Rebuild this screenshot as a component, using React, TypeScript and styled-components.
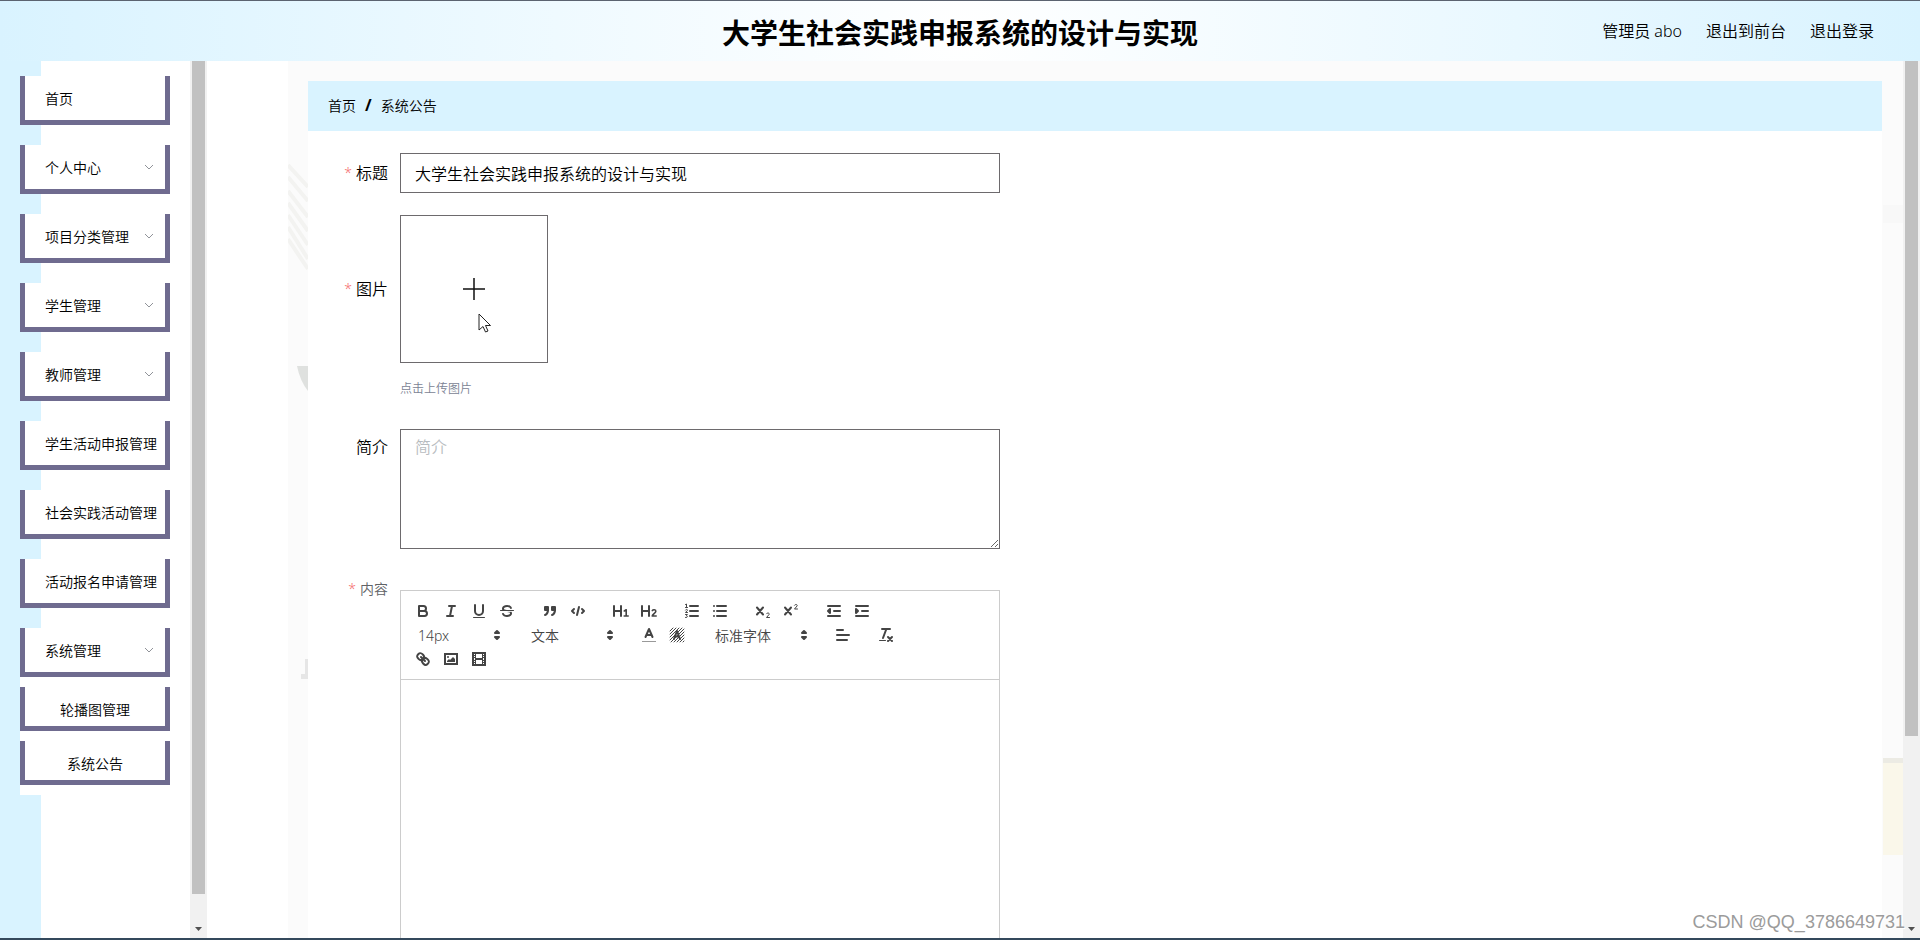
import React from 'react';
import styled, { createGlobalStyle } from 'styled-components';

const GlobalStyle = createGlobalStyle`
  * { box-sizing: border-box; }
  body {
    margin: 0;
    color: #000;
    font-family: "Noto Sans", "Noto Sans CJK SC", sans-serif;
    font-size: 14px;
    font-weight: 350;
  }
  a { color: inherit; text-decoration: none; }
  button, input, textarea, select { font-family: inherit; font-weight: inherit; margin: 0; }
  ul { list-style: none; margin: 0; padding: 0; }
`;

const Shell = styled.div`
  position: relative;
  display: flex;
  flex-direction: column;
  height: 100vh;
  overflow: hidden;
  border-top: 1px solid #5b6370;
  border-bottom: 2px solid #34495c;
`;

const Header = styled.header`
  display: grid;
  grid-template-columns: 1fr auto 1fr;
  align-items: center;
  flex: none;
  height: 60px;
  padding: 0 46px;
  background: radial-gradient(circle, #ffffff, #d9f3ff);
`;

const Title = styled.h1`
  grid-column: 2;
  margin: 0;
  padding-top: 4px;
  font-size: 28px;
  line-height: 56px;
  font-weight: 700;
`;

const UserLinks = styled.nav`
  display: flex;
  justify-content: flex-end;
  gap: 24px;
  font-size: 16px;
  line-height: 60px;
`;

const Body = styled.div`
  display: flex;
  flex: 1;
  min-height: 0;
`;

const Sidebar = styled.aside`
  display: flex;
  justify-content: space-between;
  flex: none;
  width: 207px;
  background: linear-gradient(to right, #d9f3ff 41px, #ffffff 41px);
`;

const Menu = styled.ul`
  display: flex;
  flex-direction: column;
  gap: 20px;
  width: 150px;
  margin: 15px 0 0 20px;
`;

const frame = `
  width: 100%;
  border: 5px solid #6f6b8f;
  border-top: 0;
  background: #ffffff;
  color: #000000;
  font-size: 14px;
`;

const MenuLink = styled.a`
  ${frame}
  display: flex;
  align-items: center;
  height: 49px;
  padding: 0 0 1px 20px;
  white-space: nowrap;
`;

const MenuToggle = styled.button`
  ${frame}
  display: flex;
  align-items: center;
  justify-content: space-between;
  height: 49px;
  padding: 0 10px 1px 20px;
`;

const Submenu = styled.ul`
  display: flex;
  flex-direction: column;
  gap: 10px;
  padding: 10px 0;
  background: #ffffff;
`;

const SubLink = styled.a`
  ${frame}
  display: flex;
  align-items: center;
  justify-content: center;
  height: 44px;
  padding-top: 4px;
`;

const Track = styled.div`
  display: flex;
  flex-direction: column;
  justify-content: space-between;
  align-items: center;
  flex: none;
  width: 17px;
  background: #f1f1f1;
`;

const Thumb = styled.div<{ $share: number }>`
  width: 13px;
  height: ${(p) => p.$share}%;
  background: #c1c1c1;
`;

const Main = styled.main`
  position: relative;
  display: flex;
  flex: 1;
  min-width: 0;
  margin-left: 81px;
  padding: 20px 21px 0 20px;
  background: #fbfbfb;
`;

const LeftArt = styled.svg`
  position: absolute;
  left: 0;
  top: 0;
`;

const RightArt = styled.svg`
  position: absolute;
  right: 0;
  top: 0;
`;

const Panel = styled.section`
  flex: 1;
  min-width: 0;
  background: #ffffff;
`;

const Breadcrumb = styled.nav`
  display: flex;
  align-items: center;
  gap: 9px;
  height: 50px;
  padding: 0 20px 2px;
  background: #d9f3ff;
  b { font-size: 16px; }
`;

const Form = styled.form`
  display: flex;
  flex-direction: column;
  gap: 22px;
  width: 692px;
  padding-top: 22px;
`;

const Row = styled.div`
  display: grid;
  grid-template-columns: 80px 1fr;
  column-gap: 12px;
  align-items: start;
`;

const Label = styled.label<{ $line?: number; $muted?: boolean; $required?: boolean }>`
  display: flex;
  justify-content: flex-end;
  font-size: ${(p) => (p.$muted ? 14 : 16)}px;
  line-height: ${(p) => p.$line ?? 40}px;
  color: ${(p) => (p.$muted ? '#606266' : '#000000')};
  ${(p) => p.$required && `&::before { content: "*"; color: #f56c6c; font-size: 14px; margin-right: 4px; }`}
`;

const TextInput = styled.input`
  width: 100%;
  height: 40px;
  padding: 0 14px;
  border: 1px solid #6d6a6d;
  border-radius: 0;
  background: #ffffff;
  color: #000000;
  font-size: 16px;
`;

const UploadButton = styled.button`
  position: relative;
  display: flex;
  align-items: center;
  justify-content: center;
  width: 148px;
  height: 148px;
  padding: 0;
  border: 1px solid #6d6a6d;
  background: #ffffff;
`;

const Pointer = styled.svg`
  position: absolute;
  left: 77px;
  top: 97px;
`;

const Tip = styled.div`
  padding-top: 8px;
  font-size: 12px;
  line-height: 36px;
  color: #7b8394;
`;

const TextArea = styled.textarea`
  display: block;
  width: 100%;
  height: 120px;
  padding: 5px 14px;
  border: 1px solid #6d6a6d;
  background: #ffffff;
  font-size: 16px;
  line-height: 24px;
  resize: vertical;
  &::placeholder { color: #b8bcc0; }
`;

const Editor = styled.div`
  margin-top: 19px;
  border: 1px solid #cccccc;
`;

const Toolbar = styled.div`
  display: flex;
  flex-wrap: wrap;
  padding: 8px;
  border-bottom: 1px solid #cccccc;
`;

const Group = styled.div`
  display: flex;
  height: 24px;
  margin-right: 15px;
`;

const ToolButton = styled.button`
  width: 28px;
  height: 24px;
  padding: 3px 5px;
  border: 0;
  background: none;
  svg { display: block; }
`;

const Picker = styled.span<{ $width: number }>`
  display: grid;
  grid-template-columns: 1fr 18px;
  align-items: center;
  width: ${(p) => p.$width}px;
  margin-right: 15px;
  select {
    grid-area: 1 / 1 / 2 / 3;
    width: 100%;
    height: 24px;
    padding: 0 18px 0 9px;
    border: 0;
    appearance: none;
    background: none;
    color: #444444;
    font-size: 14px;
  }
  svg { grid-area: 1 / 2; pointer-events: none; }
`;

const Canvas = styled.div`
  height: 400px;
  padding: 12px 15px;
  outline: none;
`;

const Watermark = styled.div`
  position: absolute;
  right: 15px;
  bottom: 4px;
  font-family: "Liberation Sans", Arial, sans-serif;
  font-size: 18px;
  font-weight: 400;
  line-height: 24px;
  color: #9b9b9b;
  text-shadow: 1px 1px 0 #ffffff;
`;

const Icon = ({ children }: { children: React.ReactNode }) => (
  <svg width="18" height="18" viewBox="0 0 18 18" fill="none" stroke="#444" strokeWidth="2" strokeLinecap="round" strokeLinejoin="round" aria-hidden="true">
    {children}
  </svg>
);

const solid = { fill: '#444', stroke: 'none' };

const icons: Record<string, React.ReactNode> = {
  bold: <><path d="M5,4H9.5A2.5,2.5,0,0,1,9.5,9H5Z" /><path d="M5,9h5.5A2.5,2.5,0,0,1,10.5,14H5Z" /></>,
  italic: <path d="M7,4H13M5,14H11M8,14L10,4" />,
  underline: <><path d="M5,3V9a4,4,0,0,0,8,0V3" /><rect {...solid} x="3" y="15" width="12" height="1" rx=".5" /></>,
  strike: (
    <>
      <path strokeWidth="1" d="M15.5,8.5H2.5" />
      <path {...solid} d="M9.007,8C6.542,7.791,6,7.519,6,6.5,6,5.792,7.283,5,9,5c1.571,0,2.765.679,2.969,1.309a1,1,0,0,0,1.9-.617C13.356,4.106,11.354,3,9,3,6.2,3,4,4.538,4,6.5a3.2,3.2,0,0,0,.5,1.843Z" />
      <path {...solid} d="M8.984,10C11.457,10.208,12,10.479,12,11.5c0,0.708-1.283,1.5-3,1.5-1.571,0-2.765-.679-2.969-1.309a1,1,0,1,0-1.9.617C4.644,13.894,6.646,15,9,15c2.8,0,5-1.538,5-3.5a3.2,3.2,0,0,0-.5-1.843Z" />
    </>
  ),
  quote: <g fill="#444"><rect x="4" y="5" width="3" height="3" /><rect x="11" y="5" width="3" height="3" /><path d="M7,8c0,4.031-3,5-3,5" /><path d="M14,8c0,4.031-3,5-3,5" /></g>,
  code: <path d="M5,7L3,9L5,11M13,7L15,9L13,11M10,5L8,13" />,
  h1: <><path d="M2,4V14M9,4V14M2,9H9" /><path strokeWidth="1.6" d="M12.3,9L14.2,7.8V14M12.2,14H16.2" /></>,
  h2: <><path d="M2,4V14M9,4V14M2,9H9" /><path strokeWidth="1.6" d="M12.3,8.6C13,7.4,16,7.4,15.8,9.4C15.6,11,12.4,12.2,12.2,14H16.2" /></>,
  ordered: <><path d="M7,4H15M7,9H15M7,14H15" /><path strokeWidth="1" d="M2.5,2.5L3.5,2V5M2.5,5.5H4.5M2.5,8C3,7,4.7,7.2,4.4,8.4L2.5,10.5H4.5M2.5,12.5H4.4L3.4,13.8C5,13.8,4.8,16,2.5,15.5" /></>,
  bullet: <path d="M6,4H15M6,9H15M6,14H15M3,4V4M3,9V9M3,14V14" />,
  sub: <><path d="M3,5.5L9,12.5M9,5.5L3,12.5" /><path strokeWidth="1" d="M12.5,11.7C13,10.6,15.5,10.7,15.2,12.3L12.5,15.5H15.5" /></>,
  sup: <><path d="M3,5.5L9,12.5M9,5.5L3,12.5" /><path strokeWidth="1" d="M12.5,3.2C13,2.1,15.5,2.2,15.2,3.8L12.5,7H15.5" /></>,
  outdent: <><path d="M3,14H15M3,4H15M9,9H15" /><path fill="#444" d="M5,7V11L3,9Z" /></>,
  indent: <><path d="M3,14H15M3,4H15M9,9H15" /><path fill="#444" d="M3,7V11L5,9Z" /></>,
  color: <><path stroke="#999" strokeLinecap="butt" strokeWidth="1" d="M2,15.5H16" /><path d="M5.5,11L9,3L12.5,11M11.6,9H6.4" /></>,
  background: (
    <>
      <path strokeWidth="1" d="M2,5L5,2M2,8L8,2M2,11L11,2M2,14L14,2M3,16L16,3M6,16L16,6M9,16L16,9M12,16L16,12M15,16L16,15" />
      <path d="M6,13L9,5L12,13M11,10.5H7" />
    </>
  ),
  align: <path d="M3,9H15M3,14H13M3,4H9" />,
  clean: <><path d="M5,3H13M6,12L9.35,3" /><path strokeWidth="2" d="M11,11L15,15M15,11L11,15" /><rect {...solid} x="2" y="14" width="7" height="1" rx=".5" /></>,
  link: (
    <>
      <path d="M7,7L11,11" />
      <path d="M8.9,4.577a3.476,3.476,0,0,1,.36,4.679A3.476,3.476,0,0,1,4.577,8.9C3.185,7.5,2.035,6.4,4.217,4.217S7.5,3.185,8.9,4.577Z" />
      <path d="M13.423,9.1a3.476,3.476,0,0,0-4.679-.36,3.476,3.476,0,0,0,.36,4.679c1.392,1.392,2.5,2.542,4.679.36S14.815,10.5,13.423,9.1Z" />
    </>
  ),
  image: <><rect x="3" y="4" width="12" height="10" strokeLinejoin="miter" /><circle {...solid} cx="6" cy="7" r="1" /><path {...solid} d="M5,12V11L7,9L8,10L11,7L13,9V12Z" /></>,
  video: <><rect x="3" y="3" width="12" height="12" strokeLinejoin="miter" /><path {...solid} d="M5,3h1v12h-1zM12,3h1v12h-1zM5,8h8v2h-8zM3,5h3v1h-3zM3,7h3v1h-3zM3,10h3v1h-3zM3,12h3v1h-3zM12,5h3v1h-3zM12,7h3v1h-3zM12,10h3v1h-3zM12,12h3v1h-3z" /></>,
};

const Tools = ({ names }: { names: [string, string][] }) => (
  <Group>
    {names.map(([name, label]) => (
      <ToolButton key={name} type="button" aria-label={label}><Icon>{icons[name]}</Icon></ToolButton>
    ))}
  </Group>
);

const PickerField = ({ label, value, width }: { label: string; value: string; width: number }) => (
  <Picker $width={width}>
    <select aria-label={label} defaultValue={value}><option>{value}</option></select>
    <Icon><path fill="#444" d="M6,11L8,13L10,11ZM6,7L8,5L10,7Z" /></Icon>
  </Picker>
);

const ScrollBar = ({ share }: { share: number }) => (
  <Track aria-hidden="true">
    <Thumb $share={share} />
    <svg width="17" height="17" viewBox="0 0 17 17"><path d="M5,6H12L8.5,10Z" fill="#505050" /></svg>
  </Track>
);

const menu: { text: string; toggle?: boolean }[] = [
  { text: '首页' },
  { text: '个人中心', toggle: true },
  { text: '项目分类管理', toggle: true },
  { text: '学生管理', toggle: true },
  { text: '教师管理', toggle: true },
  { text: '学生活动申报管理' },
  { text: '社会实践活动管理' },
  { text: '活动报名申请管理' },
];

const Toggle = ({ text, open = false }: { text: string; open?: boolean }) => (
  <MenuToggle type="button" aria-expanded={open}>
    {text}
    <svg width="12" height="12" viewBox="0 0 12 12" fill="none" stroke="#909399" aria-hidden="true"><path d="M2,4L6,8L10,4" /></svg>
  </MenuToggle>
);

export default function App() {
  return (
    <Shell>
      <GlobalStyle />
      <Header>
        <Title>大学生社会实践申报系统的设计与实现</Title>
        <UserLinks>
          <span>管理员 abo</span>
          <a href="#front">退出到前台</a>
          <a href="#logout">退出登录</a>
        </UserLinks>
      </Header>
      <Body>
        <Sidebar>
          <Menu>
            {menu.map((m) => (
              <li key={m.text}>{m.toggle ? <Toggle text={m.text} /> : <MenuLink href="#menu">{m.text}</MenuLink>}</li>
            ))}
            <li>
              <Toggle text="系统管理" open />
              <Submenu>
                <li><SubLink href="#carousel">轮播图管理</SubLink></li>
                <li><SubLink href="#notice">系统公告</SubLink></li>
              </Submenu>
            </li>
          </Menu>
          <ScrollBar share={95} />
        </Sidebar>
        <Main>
          <LeftArt width="20" height="640" aria-hidden="true">
            <path d="M0,104L20,126M0,116L20,140M0,130L20,156M0,142L20,170M0,154L20,184M0,166L20,198M0,178L20,208" stroke="#f3f3f1" strokeWidth="4" />
            <path d="M9,305H20V330Q12,320 9,305Z" fill="#dfe1df" />
            <path d="M17,598H20V618H13V613H17Z" fill="#e6e6e6" />
          </LeftArt>
          <Panel>
            <Breadcrumb aria-label="面包屑">
              <a href="#home">首页</a>
              <b>/</b>
              <span>系统公告</span>
            </Breadcrumb>
            <Form>
              <Row>
                <Label htmlFor="title" $required>标题</Label>
                <TextInput id="title" defaultValue="大学生社会实践申报系统的设计与实现" />
              </Row>
              <Row>
                <Label htmlFor="picture" $required $line={148}>图片</Label>
                <div>
                  <UploadButton id="picture" type="button">
                    <svg width="24" height="24" viewBox="0 0 24 24" stroke="#111" strokeWidth="1.5" aria-hidden="true"><path d="M1,12H23M12,1V23" /></svg>
                    <Pointer width="14" height="21" viewBox="0 0 14 21" aria-hidden="true">
                      <path d="M1,1V17L5,13.5L7.5,19L10,18L7.5,12.5H12.5Z" fill="#fff" stroke="#222" />
                    </Pointer>
                  </UploadButton>
                  <Tip>点击上传图片</Tip>
                </div>
              </Row>
              <Row>
                <Label htmlFor="summary" $line={36}>简介</Label>
                <TextArea id="summary" placeholder="简介" />
              </Row>
              <Row>
                <Label as="span" id="content-label" $required $muted $line={36}>内容</Label>
                <Editor>
                  <Toolbar>
                    <Tools names={[['bold', '粗体'], ['italic', '斜体'], ['underline', '下划线'], ['strike', '删除线']]} />
                    <Tools names={[['quote', '引用'], ['code', '代码']]} />
                    <Tools names={[['h1', '标题一'], ['h2', '标题二']]} />
                    <Tools names={[['ordered', '有序列表'], ['bullet', '无序列表']]} />
                    <Tools names={[['sub', '下标'], ['sup', '上标']]} />
                    <Tools names={[['outdent', '减少缩进'], ['indent', '增加缩进']]} />
                    <PickerField label="字号" value="14px" width={98} />
                    <PickerField label="段落" value="文本" width={98} />
                    <Tools names={[['color', '文字颜色'], ['background', '背景颜色']]} />
                    <PickerField label="字体" value="标准字体" width={108} />
                    <Tools names={[['align', '对齐']]} />
                    <Tools names={[['clean', '清除格式']]} />
                    <Tools names={[['link', '链接'], ['image', '图片'], ['video', '视频']]} />
                  </Toolbar>
                  <Canvas contentEditable role="textbox" aria-labelledby="content-label" />
                </Editor>
              </Row>
            </Form>
          </Panel>
          <RightArt width="20" height="820" aria-hidden="true">
            <path d="M0,144H20V162H0Z" fill="#f8f8f8" />
            <path d="M0,697H20V794H0Z" fill="#faf7ea" />
            <path d="M0,697H20V702H0Z" fill="#ecebe4" />
          </RightArt>
        </Main>
        <ScrollBar share={77} />
      </Body>
      <Watermark>CSDN @QQ_3786649731</Watermark>
    </Shell>
  );
}
